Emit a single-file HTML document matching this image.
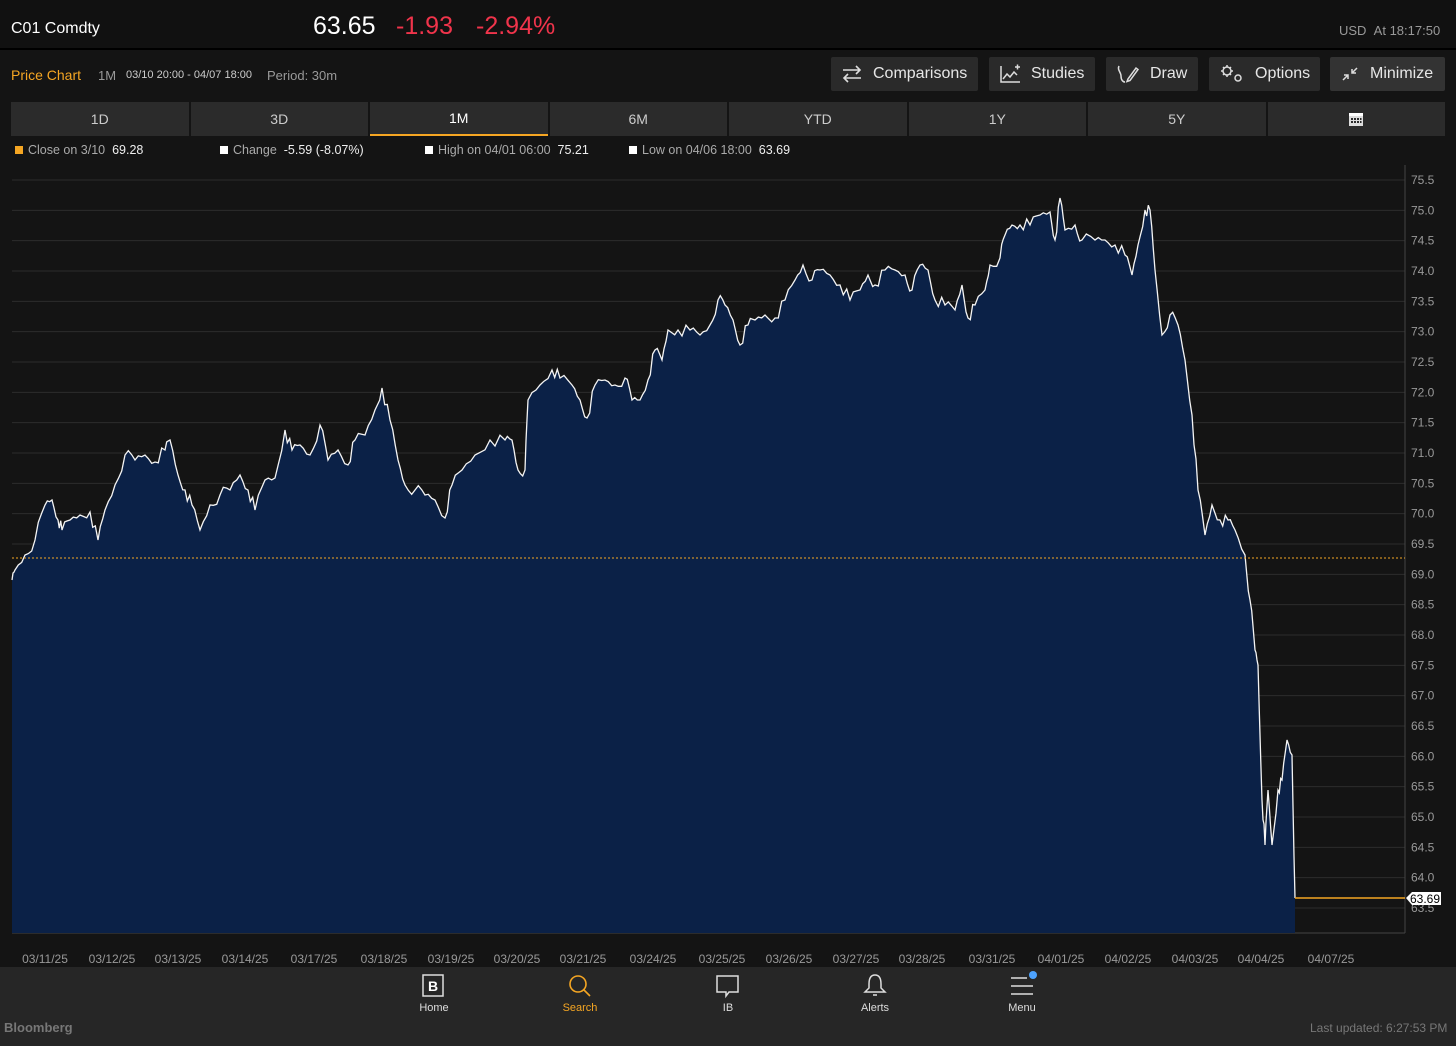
<!DOCTYPE html>
<html><head><meta charset="utf-8">
<style>
*{margin:0;padding:0;box-sizing:border-box}
body{width:1456px;height:1046px;background:#141414;font-family:"Liberation Sans",sans-serif;color:#ddd;position:relative;overflow:hidden}
.abs{position:absolute;white-space:nowrap}
#top{position:absolute;left:0;top:0;width:1456px;height:50px;background:#111;border-bottom:2px solid #000}
.btn{position:absolute;top:57px;height:34px;background:#2a2a2a;border-radius:2px;color:#e6e6e6;font-size:16px;display:flex;align-items:center;padding-left:10px}
.btn svg{margin-right:10px}
#tabs{position:absolute;left:11px;top:102px;width:1434px;height:34px;display:flex;gap:2px}
.tab{flex:1;background:#2b2b2b;color:#ccc;font-size:14px;display:flex;align-items:center;justify-content:center}
.tab.on{border-bottom:2px solid #f5a623;color:#fff}
.leg{position:absolute;top:143px;font-size:12.5px;color:#aaa}
.leg b{font-weight:normal;color:#eee}
.sq{display:inline-block;width:8px;height:8px;background:#fff;margin-right:5px}
#nav{position:absolute;left:0;top:967px;width:1456px;height:79px;background:#262626}
.ni{position:absolute;top:1002px;font-size:11px;color:#ddd;transform:translateX(-50%)}
</style></head><body>
<div id="top"></div>
<div class="abs" style="left:11px;top:20px;font-size:16px;color:#fff">C01 Comdty</div>
<div class="abs" style="left:313px;top:12px;font-size:25px;color:#fff">63.65</div>
<div class="abs" style="left:396px;top:12px;font-size:25px;color:#f0344b">-1.93</div>
<div class="abs" style="left:476px;top:12px;font-size:25px;color:#f0344b">-2.94%</div>
<div class="abs" style="left:1339px;top:23px;font-size:13px;color:#999">USD &nbsp;At 18:17:50</div>

<div class="abs" style="left:11px;top:67px;font-size:14px;color:#f5a623">Price Chart</div>
<div class="abs" style="left:98px;top:68px;font-size:13px;color:#999">1M</div>
<div class="abs" style="left:126px;top:69px;font-size:11px;color:#ccc">03/10 20:00 - 04/07 18:00</div>
<div class="abs" style="left:267px;top:68px;font-size:13px;color:#999">Period: 30m</div>

<div class="btn" style="left:831px;width:147px"><svg width="22" height="18" viewBox="0 0 22 18" fill="none" stroke="#ddd" stroke-width="1.6"><path d="M2 5h17M15 1l4 4-4 4M20 13H3M7 9l-4 4 4 4"/></svg>Comparisons</div>
<div class="btn" style="left:989px;width:106px"><svg width="22" height="20" viewBox="0 0 22 20" fill="none" stroke="#ddd" stroke-width="1.5"><path d="M2 2v16h19M4 15l4-5 3 3 4-5 3 3M16 3h5M18.5 0.5v5"/></svg>Studies</div>
<div class="btn" style="left:1106px;width:92px"><svg width="24" height="20" viewBox="0 0 24 20" fill="none" stroke="#ddd" stroke-width="1.5"><path d="M3 2c-2 4 2 6 2 10s2 6 4 6M12 15l8-11 2 1.5-8 11-3 1z"/></svg>Draw</div>
<div class="btn" style="left:1209px;width:111px"><svg width="26" height="20" viewBox="0 0 26 20" fill="none" stroke="#ddd" stroke-width="1.5"><circle cx="8" cy="7" r="4"/><circle cx="19" cy="14" r="3"/><path d="M8 1v2M8 11v2M2 7h2M12 7h2M4 3l1.5 1.5M10.5 9.5L12 11M12 3l-1.5 1.5M4 11l1.5-1.5"/></svg>Options</div>
<div class="btn" style="left:1330px;width:115px;background:#333"><svg width="20" height="18" viewBox="0 0 20 18" fill="none" stroke="#ddd" stroke-width="1.5"><path d="M3 15l5-5M4 10h4v4M17 3l-5 5M12 4v4h4"/></svg>Minimize</div>

<div id="tabs"><div class="tab">1D</div><div class="tab">3D</div><div class="tab on">1M</div><div class="tab">6M</div><div class="tab">YTD</div><div class="tab">1Y</div><div class="tab">5Y</div><div class="tab"><svg width="16" height="16" viewBox="0 0 16 16"><rect x="1" y="2" width="14" height="13" fill="#ddd"/><rect x="1" y="2" width="14" height="3" fill="#fff"/><g fill="#2b2b2b"><rect x="3" y="7" width="2" height="2"/><rect x="6" y="7" width="2" height="2"/><rect x="9" y="7" width="2" height="2"/><rect x="12" y="7" width="1.5" height="2"/><rect x="3" y="10" width="2" height="2"/><rect x="6" y="10" width="2" height="2"/><rect x="9" y="10" width="2" height="2"/><rect x="12" y="10" width="1.5" height="2"/></g></svg></div></div>

<div class="leg" style="left:15px"><span class="sq" style="background:#f5a623"></span>Close on 3/10 &nbsp;<b>69.28</b></div>
<div class="leg" style="left:220px"><span class="sq"></span>Change &nbsp;<b>-5.59 (-8.07%)</b></div>
<div class="leg" style="left:425px"><span class="sq"></span>High on 04/01 06:00 &nbsp;<b>75.21</b></div>
<div class="leg" style="left:629px"><span class="sq"></span>Low on 04/06 18:00 &nbsp;<b>63.69</b></div>

<svg id="ch" class="abs" style="left:0;top:0" width="1456" height="967">
<g id="grid"></g>
<line x1="1405" y1="165" x2="1405" y2="933" stroke="#444"/>
<line x1="12" y1="933" x2="1405" y2="933" stroke="#444"/>
<polygon id="fill" fill="#0b2147"/>
<polyline id="pl" fill="none" stroke="#f4f4f4" stroke-width="1.3"/>
<line x1="12" y1="558" x2="1405" y2="558" stroke="#f5a623" stroke-dasharray="2,2" stroke-width="1"/>
<line x1="1295" y1="898" x2="1405" y2="898" stroke="#f5a623" stroke-width="1.5"/>
<g id="lab" font-size="12" fill="#999" font-family="Liberation Sans"></g>
<path d="M1406 898l6-6h29v13h-29z" fill="#fff"/>
<text x="1410" y="903" font-size="12" fill="#000" font-family="Liberation Sans">63.69</text>
</svg>

<div id="nav"></div>
<svg class="abs" style="left:422px;top:974px" width="22" height="24"><rect x="1" y="1" width="20" height="21" fill="none" stroke="#ddd" stroke-width="1.5"/><text x="6" y="17" font-size="14" font-weight="bold" fill="#fff" font-family="Liberation Sans">B</text></svg>
<svg class="abs" style="left:568px;top:974px" width="24" height="26" fill="none" stroke="#f5a623" stroke-width="1.6"><circle cx="10" cy="10" r="8"/><path d="M16 16l6 6"/></svg>
<svg class="abs" style="left:716px;top:975px" width="24" height="24" fill="none" stroke="#ddd" stroke-width="1.5"><path d="M1 1h21v16H13l-3 4v-4H1z"/></svg>
<svg class="abs" style="left:863px;top:974px" width="24" height="24" fill="none" stroke="#ddd" stroke-width="1.5"><path d="M12 1c-5 0-6 5-6 9v4l-4 4h20l-4-4v-4c0-4-1-9-6-9zM10 21h4"/></svg>
<svg class="abs" style="left:1010px;top:968px" width="30" height="30"><g stroke="#ddd" stroke-width="1.5"><path d="M1 10h16M1 18h22M1 26h22"/></g><circle cx="23" cy="7" r="4" fill="#4da3ff"/></svg>
<div class="ni" style="left:434px">Home</div>
<div class="ni" style="left:580px;color:#f5a623">Search</div>
<div class="ni" style="left:728px">IB</div>
<div class="ni" style="left:875px">Alerts</div>
<div class="ni" style="left:1022px">Menu</div>
<div class="abs" style="left:4px;top:1020px;font-size:13px;color:#777;font-weight:bold">Bloomberg</div>
<div class="abs" style="left:1310px;top:1021px;font-size:12px;color:#777">Last updated: 6:27:53 PM</div>

<script>
var ns="http://www.w3.org/2000/svg",g=document.getElementById('grid'),lab=document.getElementById('lab');
for(var i=0;i<25;i++){var v=75.5-i*0.5,y=180+i*30.333;
var l=document.createElementNS(ns,'line');l.setAttribute('x1',12);l.setAttribute('x2',1405);l.setAttribute('y1',y);l.setAttribute('y2',y);l.setAttribute('stroke','#2c2c2c');g.appendChild(l);
var t=document.createElementNS(ns,'text');t.setAttribute('x',1411);t.setAttribute('y',y+4);t.textContent=v.toFixed(1);lab.appendChild(t);}
var d=["03/11/25","03/12/25","03/13/25","03/14/25","03/17/25","03/18/25","03/19/25","03/20/25","03/21/25","03/24/25","03/25/25","03/26/25","03/27/25","03/28/25","03/31/25","04/01/25","04/02/25","04/03/25","04/04/25","04/07/25"],
dx=[45,112,178,245,314,384,451,517,583,653,722,789,856,922,992,1061,1128,1195,1261,1331];
for(var i=0;i<d.length;i++){var t=document.createElementNS(ns,'text');t.setAttribute('x',dx[i]);t.setAttribute('y',963);t.setAttribute('text-anchor','middle');t.textContent=d[i];lab.appendChild(t);}
var p=[12,580,15,570,25,555,35,540,45,505,52,500,58,520,62,530,70,520,80,515,90,512,98,540,105,510,115,485,125,455,135,460,145,455,155,462,165,450,170,440,178,475,185,490,192,505,200,530,210,505,220,495,230,490,240,475,248,490,255,510,265,480,275,478,285,430,292,450,300,445,310,455,320,425,328,460,338,450,348,465,355,440,365,435,375,410,382,388,390,420,398,460,405,485,415,490,425,495,435,500,445,518,452,485,462,470,475,455,490,440,505,440,512,440,518,470,525,470,528,400,540,385,552,370,560,378,572,385,580,400,587,418,595,385,605,380,615,385,625,378,632,400,640,400,648,380,655,350,662,360,668,330,678,330,690,330,700,335,710,325,718,300,725,305,733,320,740,345,748,325,755,320,765,315,775,318,785,300,795,280,803,265,812,280,820,270,830,275,840,285,850,300,860,290,868,275,875,285,885,270,895,270,905,275,912,290,920,265,928,270,935,300,945,305,955,310,962,285,968,318,975,305,985,290,990,265,1000,258,1005,235,1012,225,1020,225,1030,225,1040,215,1050,212,1055,240,1060,198,1065,230,1075,225,1082,240,1095,240,1105,240,1115,245,1125,255,1132,275,1138,245,1145,210,1150,210,1155,270,1162,335,1170,315,1178,325,1185,360,1192,415,1198,490,1205,535,1212,505,1220,520,1228,520,1235,530,1245,555,1250,600,1255,650,1258,665,1262,800,1265,845,1268,790,1272,845,1278,790,1282,780,1287,740,1292,755,1295,898];
// add jitter
var pts=[];for(var i=0;i<p.length-2;i+=2){var x0=p[i],y0=p[i+1],x1=p[i+2],y1=p[i+3];for(var k=0;k<3;k++){var f=k/3;pts.push((x0+(x1-x0)*f).toFixed(1)+","+(y0+(y1-y0)*f+(k?((i*7+k*13)%11-5)*1.2:0)).toFixed(1));}}
pts.push("1295,898");
document.getElementById('pl').setAttribute('points',pts.join(' '));
document.getElementById('fill').setAttribute('points',pts.join(' ')+" 1295,933 12,933");
</script>
</body></html>
